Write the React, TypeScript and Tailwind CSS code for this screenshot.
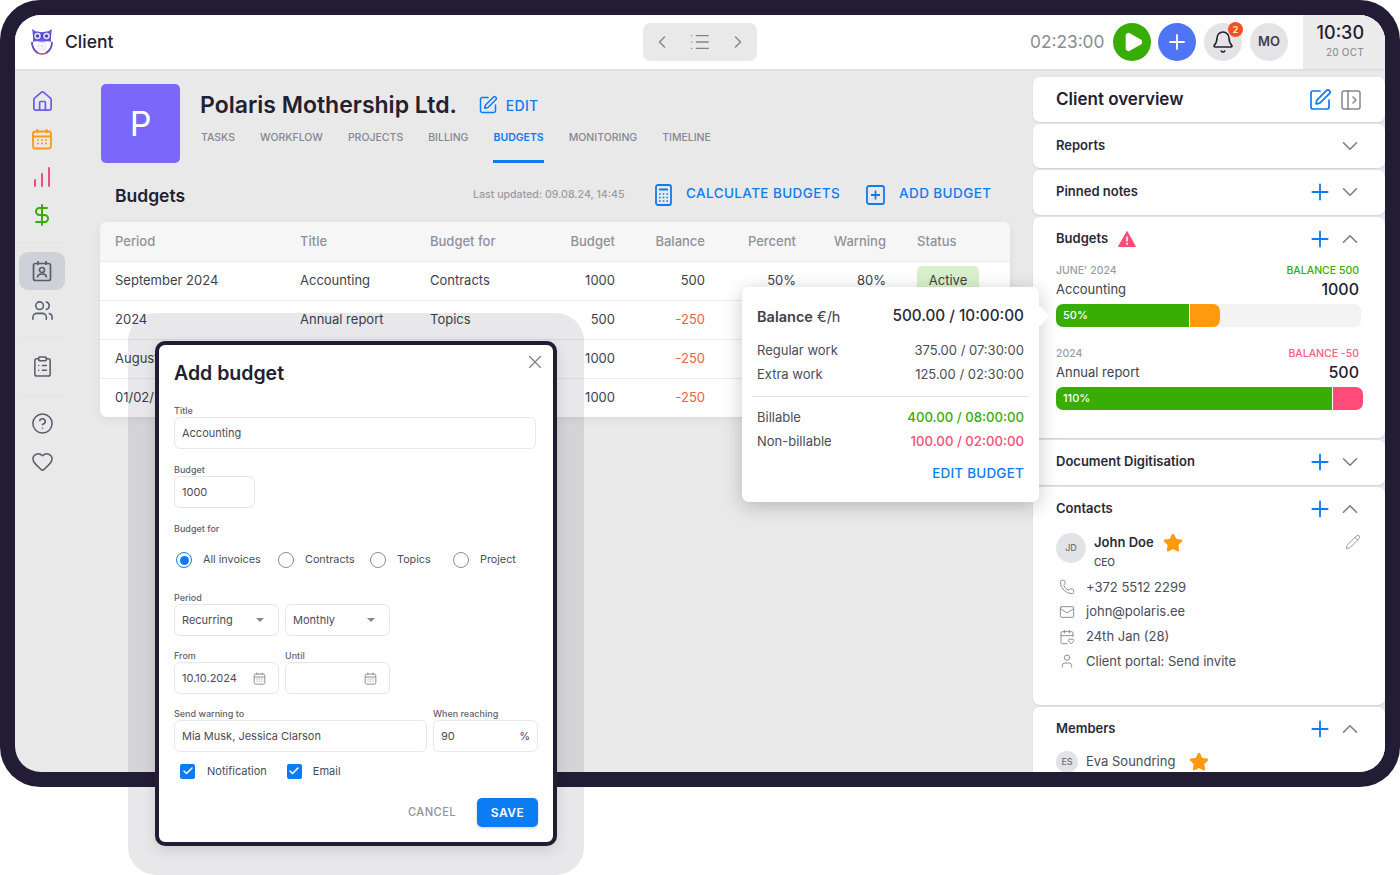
import React from 'react';
import {
  Home, ChartNoAxesColumnIncreasing, DollarSign, Users, ClipboardList, CircleHelp, Heart, SquarePen, ChevronDown, ChevronUp, ChevronLeft, ChevronRight,
  Plus, Play, Bell, Phone, Mail, CalendarHeart, User, Pencil, Star, X, List, PanelLeftOpen, Check,
} from 'lucide-react';

function Owl() {
  return (
    <svg width="24" height="28" viewBox="0 0 24 28" fill="none">
      <path d="M2 14c0 8 5 12 10 12s10-4 10-12" stroke="#e0406c" strokeWidth="1.4" />
      <path d="M2 14c0 6 3 9 6 11" stroke="#5a4fd0" strokeWidth="1.6" />
      <path d="M22 14c0 6-3 9-6 11" stroke="#5a4fd0" strokeWidth="1.6" />
      <path d="M3 8 2 1l5 3h10l5-3-1 7v6c-2-1-4-1-9 0-5-1-7-1-9 0z" fill="#6d5fe8" />
      <circle cx="7.5" cy="8" r="4" fill="#d9d5fb" stroke="#4a3fc4" strokeWidth="1.2" />
      <circle cx="16.5" cy="8" r="4" fill="#d9d5fb" stroke="#4a3fc4" strokeWidth="1.2" />
      <circle cx="7.5" cy="8" r="1.5" fill="#3b30a8" />
      <circle cx="16.5" cy="8" r="1.5" fill="#3b30a8" />
      <path d="M12 14v8M8 18h8" stroke="#dcdce6" strokeWidth="1" />
      <circle cx="12" cy="18" r="4" stroke="#e4e4ec" strokeWidth="1" />
    </svg>
  );
}

function CalendarGrid({ size = 22, color = '#ff9a0f', sw = 1.8 }: { size?: number; color?: string; sw?: number }) {
  return (
    <svg width={size} height={size} viewBox="0 0 22 22" fill="none" stroke={color} strokeWidth={sw}>
      <rect x="2" y="3.5" width="18" height="17" rx="2.5" />
      <path d="M2 8.5h18M6.5 1v4M15.500 1v4" />
      <path d="M6 12h2M10 12h2M14 12h2M6 15.500h2M10 15.500h2M14 15.500h2" strokeWidth="1.3" />
    </svg>
  );
}

function ContactIcon() {
  return (
    <svg width="22" height="22" viewBox="0 0 22 22" fill="none" stroke="#5a5d6b" strokeWidth="1.7">
      <rect x="2.500" y="3.500" width="17" height="17" rx="2" />
      <path d="M7 1v4M15 1v4" />
      <circle cx="11" cy="10" r="2.500" />
      <path d="M6.500 17.500c0-2.500 2-3.500 4.500-3.500s4.500 1 4.500 3.500" />
    </svg>
  );
}

function CalcIcon() {
  return (
    <svg width="17" height="22" viewBox="0 0 17 22" fill="none" stroke="#0b7cf2" strokeWidth="1.8">
      <rect x="1" y="1" width="15" height="20" rx="2" />
      <path d="M4 5.500h9" strokeWidth="2.200" />
      <path d="M4 10h1.600M7.700 10h1.600M11.400 10h1.600M4 13.500h1.600M7.700 13.500h1.600M11.400 13.500h1.600M4 17h1.600M7.700 17h1.600M11.400 17h1.600" strokeWidth="1.500" />
    </svg>
  );
}

function AddIcon() {
  return (
    <svg width="19" height="20" viewBox="0 0 19 20" fill="none" stroke="#0b7cf2" strokeWidth="1.8">
      <rect x="1" y="1" width="17" height="18" rx="2" />
      <path d="M9.500 5.500v9M5 10h9" />
    </svg>
  );
}

function WarnIcon() {
  return (
    <svg width="18" height="16" viewBox="0 0 18 16">
      <path d="M9 .5 17.500 15.500H.5z" fill="#ff4b78" stroke="#ff4b78" strokeLinejoin="round" />
      <path d="M9 5.500v5" stroke="#fff" strokeWidth="1.600" />
      <circle cx="9" cy="12.700" r="1" fill="#fff" />
    </svg>
  );
}

function Sidebar() {
  return (
    <aside className="flex w-[85px] shrink-0 flex-col items-start pl-[4px] pt-[21px]">
      <div className="flex w-[46px] flex-col items-center gap-[16px]">
        <Home size={23} color="#6a5ee8" strokeWidth={1.8} className="-my-[0.5px]" />
        <CalendarGrid />
        <ChartNoAxesColumnIncreasing size={24} color="#ee4f78" strokeWidth={2} className="-my-px" />
        <DollarSign size={24} color="#37ad05" strokeWidth={2} className="-my-px" />
      </div>
      <div className="mt-[16px] h-px w-[46px] bg-[#e2e2e4]" />
      <div className="mt-[9px] flex h-[38px] w-[46px] items-center justify-center rounded-[9px] bg-[#ced1d8]">
        <ContactIcon />
      </div>
      <div className="mt-[9px] flex w-[46px] justify-center">
        <Users size={23} color="#5a5d6b" strokeWidth={1.6} />
      </div>
      <div className="mt-[15px] h-px w-[46px] bg-[#e2e2e4]" />
      <div className="mt-[17px] flex w-[46px] justify-center">
        <ClipboardList size={23} color="#5a5d6b" strokeWidth={1.6} />
      </div>
      <div className="mt-[17px] h-px w-[46px] bg-[#e2e2e4]" />
      <div className="mt-[16px] flex w-[46px] flex-col items-center gap-[15px]">
        <CircleHelp size={23} color="#5a5d6b" strokeWidth={1.6} />
        <Heart size={23} color="#5a5d6b" strokeWidth={1.6} />
      </div>
    </aside>
  );
}

function Header() {
  return (
    <header className="relative z-10 flex h-[54px] shrink-0 items-center bg-white shadow-[0_1px_2px_rgba(0,0,0,0.08)]">
      <div className="ml-[15px] flex w-[613px] items-center gap-[11px]">
        <Owl />
        <span className="text-[17.500px] font-medium text-[#232030]">Client</span>
      </div>
      <div className="flex h-[38px] w-[114px] items-center justify-between rounded-[8px] bg-[#e9e9ea] px-[9px]">
        <ChevronLeft size={20} color="#82858f" strokeWidth={1.7} />
        <List size={22} color="#82858f" strokeWidth={1.4} />
        <ChevronRight size={20} color="#82858f" strokeWidth={1.7} />
      </div>
      <span className="ml-[273px] w-[75px] whitespace-nowrap text-[17.300px] text-[#8a8c93]">02:23:00</span>
      <div className="ml-[8px] flex size-[38px] items-center justify-center rounded-full bg-[#37ad05]">
        <Play size={22} fill="#fff" color="#fff" className="ml-[2px]" />
      </div>
      <div className="ml-[7px] flex size-[38px] items-center justify-center rounded-full bg-[#4f74f5]">
        <Plus size={24} color="#fff" strokeWidth={1.8} />
      </div>
      <div className="relative ml-[8px] flex size-[38px] items-center justify-center rounded-full bg-[#e4e4e6]">
        <Bell size={24} color="#232030" strokeWidth={1.6} />
        <span className="absolute -right-[1px] -top-[1px] flex size-[15px] items-center justify-center rounded-full bg-[#f4511e] text-[9px] font-medium text-white">2</span>
      </div>
      <div className="ml-[8px] flex size-[38px] items-center justify-center rounded-full bg-[#e4e4e6] text-[13px] font-semibold text-[#3d3f4b]">MO</div>
      <div className="ml-[15px] flex h-full flex-1 flex-col items-end justify-center bg-[#ececed] pb-[5px] pr-[21px]">
        <span className="text-[18px] font-medium leading-[22px] text-[#232030]">10:30</span>
        <span className="mt-[2px] text-[10px] font-medium leading-[12px] tracking-[0.2px] text-[#92949b]">20 OCT</span>
      </div>
    </header>
  );
}

const tabs = ['TASKS', 'WORKFLOW', 'PROJECTS', 'BILLING', 'BUDGETS', 'MONITORING', 'TIMELINE'];

function Row({ a, b, c, d, e, f, g, active }: { a: string; b: string; c: string; d: string; e: string; f: string; g: string; active?: boolean }) {
  const neg = e.startsWith('-');
  return (
    <div className="grid h-[39px] grid-cols-[185px_130px_92px_93px_90px_91px_90px_1fr] items-center border-t border-[#ececec] pl-[15px] text-[13px] text-[#3d3f4b]">
      <span>{a}</span>
      <span>{b}</span>
      <span>{c}</span>
      <span className="text-right">{d}</span>
      <span className={`text-right ${neg ? 'text-[#f2603c]' : ''}`}>{e}</span>
      <span className="text-right">{f}</span>
      <span className="text-right">{g}</span>
      {active ? <span className="ml-[31px] flex h-[30px] w-[62px] items-center justify-center rounded-[5px] bg-[#daf0cc]">Active</span> : <span />}
    </div>
  );
}

function Main() {
  return (
    <main className="w-[933px] shrink-0 pt-[15px]">
      <div className="flex">
        <div className="ml-[1px] flex size-[79px] items-center justify-center rounded-[5px] bg-[#7b68fb] text-[34px] font-normal text-white">P</div>
        <div className="ml-[20px] pt-[6px]">
          <div className="flex items-center">
            <h1 className="text-[23px] font-semibold leading-[30px] text-[#232030]">Polaris Mothership Ltd.</h1>
            <SquarePen size={20} color="#0b7cf2" strokeWidth={1.8} className="ml-[21px]" />
            <span className="ml-[8px] text-[14px] font-medium tracking-[0.3px] text-[#0b7cf2]">EDIT</span>
          </div>
          <nav className="ml-[1px] mt-[9px] flex gap-[25px] text-[10.500px] font-medium text-[#85878f]">
            {tabs.map((t) => (
              <span key={t} className={`h-[34px] border-b-[3px] pt-[1px] ${t === 'BUDGETS' ? 'border-[#0b7cf2] font-semibold text-[#0b7cf2]' : 'border-transparent'}`}>{t}</span>
            ))}
          </nav>
        </div>
      </div>
      <div className="mt-[20px] flex h-[24px] items-center pl-[15px]">
        <h2 className="mt-[2px] w-[358px] text-[17.500px] font-semibold text-[#232030]">Budgets</h2>
        <span className="w-[182px] text-[10.600px] font-medium text-[#9a9ca3]">Last updated: 09.08.24, 14:45</span>
        <CalcIcon />
        <span className="mb-[4px] ml-[14px] text-[13.500px] font-medium tracking-[0.4px] text-[#0b7cf2]">CALCULATE BUDGETS</span>
        <span className="ml-[26px] flex"><AddIcon /></span>
        <span className="mb-[4px] ml-[14px] text-[13.500px] font-medium tracking-[0.4px] text-[#0b7cf2]">ADD BUDGET</span>
      </div>
      <div className="mt-[15px] w-[910px] overflow-hidden rounded-[7px] bg-white shadow-[0_2px_10px_rgba(0,0,0,0.06)]">
        <div className="grid h-[39px] grid-cols-[185px_130px_92px_93px_90px_91px_90px_1fr] items-center bg-[#f6f6f6] pl-[15px] text-[13px] font-medium text-[#90929a]">
          <span>Period</span><span>Title</span><span>Budget for</span>
          <span className="text-right">Budget</span><span className="text-right">Balance</span>
          <span className="text-right">Percent</span><span className="text-right">Warning</span>
          <span className="pl-[31px]">Status</span>
        </div>
        <Row a="September 2024" b="Accounting" c="Contracts" d="1000" e="500" f="50%" g="80%" active />
        <Row a="2024" b="Annual report" c="Topics" d="500" e="-250" f="" g="" />
        <Row a="August 2024" b="" c="" d="1000" e="-250" f="" g="" />
        <Row a="01/02/2024" b="" c="" d="1000" e="-250" f="" g="" />
      </div>
    </main>
  );
}

function Section({ title, h, plus, open, warn, children }: { title: string; h: number; plus?: boolean; open?: boolean; warn?: boolean; children?: React.ReactNode }) {
  return (
    <section style={{ height: h }} className="shrink-0 rounded-[7px] bg-white shadow-[0_1px_2px_rgba(0,0,0,0.1)]">
      <div className="flex h-[44px] items-center pl-[23px] pr-[22px]">
        <span className="pb-[1px] text-[13px] font-semibold text-[#2b2938]">{title}</span>
        {warn && <span className="ml-[10px] flex"><WarnIcon /></span>}
        <span className="flex-1" />
        {plus && <Plus size={26} color="#0b7cf2" strokeWidth={1.7} className="mr-[4px]" />}
        {open ? <ChevronUp size={26} color="#7d7f88" strokeWidth={1.5} /> : <ChevronDown size={26} color="#7d7f88" strokeWidth={1.5} />}
      </div>
      {children}
    </section>
  );
}

function BudgetBlock({ year, bal, balCls, title, amount, children }: { year: string; bal: string; balCls: string; title: string; amount: string; children: React.ReactNode }) {
  return (
    <div className="pl-[23px] pr-[26px]">
      <div className="flex items-center justify-between text-[10.500px] font-medium leading-[14px]">
        <span className="text-[#9a9ca3]">{year}</span>
        <span className={balCls}>{bal}</span>
      </div>
      <div className="flex items-center justify-between leading-[22px]">
        <span className="text-[13px] text-[#3d3f4b]">{title}</span>
        <span className="text-[16px] font-medium text-[#232030]">{amount}</span>
      </div>
      {children}
    </div>
  );
}

function ContactLine({ icon, text }: { icon: React.ReactNode; text: string }) {
  return (
    <div className="flex h-[24.700px] items-center text-[13px] text-[#4a4c58]">
      <span className="flex w-[30px] pl-[3px]">{icon}</span>
      <span>{text}</span>
    </div>
  );
}

function RightPanel() {
  return (
    <aside className="flex w-[352px] shrink-0 flex-col gap-[2px] pt-[8px]">
      <div className="flex h-[45px] shrink-0 items-center rounded-[7px] bg-white pl-[23px] pr-[22px] shadow-[0_1px_2px_rgba(0,0,0,0.1)]">
        <span className="flex-1 text-[17px] font-semibold text-[#232030]">Client overview</span>
        <SquarePen size={24} color="#0b7cf2" strokeWidth={1.7} />
        <PanelLeftOpen size={24} color="#85878f" strokeWidth={1.5} className="ml-[7px]" />
      </div>
      <Section title="Reports" h={44} />
      <Section title="Pinned notes" h={45} plus />
      <Section title="Budgets" h={221} plus open warn>
        <div className="mt-[3px]">
          <BudgetBlock year="JUNE' 2024" bal="BALANCE 500" balCls="text-[#37ad05]" title="Accounting" amount="1000">
            <div className="mt-[4px] flex h-[23px] w-[305px] overflow-hidden rounded-[7px] bg-[#f3f3f4] text-[11px] font-medium text-white">
              <div className="flex w-[134px] items-center border-r border-white bg-[#37ad05] pl-[7px]">50%</div>
              <div className="w-[30px] rounded-r-[7px] bg-[#ff9a0f]" />
            </div>
          </BudgetBlock>
        </div>
        <div className="mt-[20px]">
          <BudgetBlock year="2024" bal="BALANCE -50" balCls="text-[#ff5a82]" title="Annual report" amount="500">
            <div className="mt-[4px] flex h-[23px] w-[307px] overflow-hidden rounded-[7px] text-[11px] font-medium text-white">
              <div className="flex w-[277px] items-center border-r border-white bg-[#37ad05] pl-[7px]">110%</div>
              <div className="flex-1 bg-[#ff4b78]" />
            </div>
          </BudgetBlock>
        </div>
      </Section>
      <Section title="Document Digitisation" h={45} plus />
      <Section title="Contacts" h={218} plus open>
        <div className="pl-[23px] pr-[24px] pt-[2px]">
          <div className="flex">
            <div className="flex size-[30px] items-center justify-center rounded-full bg-[#e2e3e6] text-[9px] font-medium text-[#70727c]">JD</div>
            <div className="ml-[8px] flex-1">
              <div className="flex h-[20px] items-center">
                <span className="text-[13px] font-semibold text-[#2b2938]">John Doe</span>
                <Star size={20} fill="#ff9a0f" color="#ff9a0f" className="ml-[9px]" />
              </div>
              <div className="mt-[3px] text-[10px] font-medium leading-[12px] text-[#4a4c58]">CEO</div>
            </div>
            <Pencil size={16} color="#8f9199" strokeWidth={1.4} className="mt-[1px]" />
          </div>
          <div className="mt-[7px]">
            <ContactLine icon={<Phone size={16} color="#85878f" strokeWidth={1.4} />} text="+372 5512 2299" />
            <ContactLine icon={<Mail size={16} color="#85878f" strokeWidth={1.4} />} text="john@polaris.ee" />
            <ContactLine icon={<CalendarHeart size={16} color="#85878f" strokeWidth={1.4} />} text="24th Jan (28)" />
            <ContactLine icon={<User size={16} color="#85878f" strokeWidth={1.4} />} text="Client portal: Send invite" />
          </div>
        </div>
      </Section>
      <Section title="Members" h={80} plus open>
        <div className="flex items-center pl-[23px] text-[13px] text-[#4a4c58]">
          <div className="flex size-[22px] items-center justify-center rounded-full bg-[#e2e3e6] text-[9px] font-medium text-[#70727c]">ES</div>
          <span className="ml-[8px]">Eva Soundring</span>
          <Star size={20} fill="#ff9a0f" color="#ff9a0f" className="ml-[14px]" />
        </div>
      </Section>
    </aside>
  );
}

function Popover() {
  return (
    <div className="absolute left-[742px] top-[287px] h-[215px] w-[297px] rounded-[7px] bg-white px-[15px] pt-[18px] shadow-[0_4px_20px_rgba(0,0,0,0.22)]">
      <span className="absolute -right-[8px] top-[22px] size-[14px] rotate-45 bg-white" />
      <div className="flex items-center justify-between">
        <span className="text-[14.500px] text-[#3d3f4b]"><b className="font-semibold">Balance</b> €/h</span>
        <span className="text-[15.300px] font-medium text-[#2b2938]">500.00 / 10:00:00</span>
      </div>
      <div className="mt-[13px] space-y-[5px] text-[13px] leading-[19px] text-[#4a4c58]">
        <div className="flex justify-between"><span>Regular work</span><span>375.00 / 07:30:00</span></div>
        <div className="flex justify-between"><span>Extra work</span><span>125.00 / 02:30:00</span></div>
      </div>
      <div className="-mx-[5px] mt-[12px] h-px bg-[#e4e4e6]" />
      <div className="mt-[11px] space-y-[5px] text-[13px] leading-[19px] text-[#4a4c58]">
        <div className="flex justify-between"><span>Billable</span><span className="text-[13.200px] font-medium text-[#37ad05]">400.00 / 08:00:00</span></div>
        <div className="flex justify-between"><span>Non-billable</span><span className="text-[13.200px] font-medium text-[#f04f78]">100.00 / 02:00:00</span></div>
      </div>
      <div className="mt-[12px] text-right text-[13.500px] font-medium tracking-[0.2px] text-[#0b7cf2]">EDIT BUDGET</div>
    </div>
  );
}

function Field({ label, className, children }: { label: string; className?: string; children: React.ReactNode }) {
  return (
    <div className={className}>
      <div className="text-[9px] font-medium leading-[11px] text-[#5f616c]">{label}</div>
      <div className="mt-[1px] flex h-[32px] items-center justify-between rounded-[6px] border border-[#e7e7ea] px-[7px] text-[11px] text-[#4a4c58]">{children}</div>
    </div>
  );
}

function Radio({ label, on, w }: { label: string; on?: boolean; w: string }) {
  return (
    <div className={`flex items-center ${w}`}>
      <span className={`flex size-[16px] shrink-0 items-center justify-center rounded-full border-[1.500px] ${on ? 'border-[#0b7cf2]' : 'border-[#8a8c93]'}`}>
        {on && <span className="size-[9px] rounded-full bg-[#0b7cf2]" />}
      </span>
      <span className="ml-[11px] text-[10.800px] text-[#4a4c58]">{label}</span>
    </div>
  );
}

function CheckBox({ label, gap }: { label: string; gap: string }) {
  return (
    <div className="flex items-center">
      <span className="flex size-[15px] items-center justify-center rounded-[2px] bg-[#0b7cf2]"><Check size={12} color="#fff" strokeWidth={3} /></span>
      <span className={`text-[11px] text-[#4a4c58] ${gap}`}>{label}</span>
    </div>
  );
}

const Caret = () => <span className="mr-[7px] h-0 w-0 border-x-[4px] border-t-[4px] border-x-transparent border-t-[#85878f]" />;

function Modal() {
  return (
    <div className="absolute left-[128px] top-[313px] h-[562px] w-[456px] rounded-[28px] bg-[rgba(30,30,50,0.1)] pl-[27px] pt-[28px]">
      <div className="relative h-[505px] w-[402px] rounded-[10px] border-[4px] border-[#231c35] bg-white pl-[15px] shadow-[0_4px_14px_rgba(0,0,0,0.12)]">
        <X size={22} color="#7d7f88" strokeWidth={1.4} className="absolute right-[7px] top-[6px]" />
        <h3 className="pt-[14px] text-[19.500px] font-semibold leading-[28px] text-[#232030]">Add budget</h3>
        <Field label="Title" className="mt-[18px] w-[362px]"><span>Accounting</span></Field>
        <Field label="Budget" className="mt-[15px] w-[81px]"><span>1000</span></Field>
        <div className="mt-[15px] text-[9px] font-medium leading-[11px] text-[#5f616c]">Budget for</div>
        <div className="ml-[2px] mt-[14px] flex h-[24px] items-center">
          <Radio label="All invoices" on w="w-[102px]" />
          <Radio label="Contracts" w="w-[92px]" />
          <Radio label="Topics" w="w-[83px]" />
          <Radio label="Project" w="w-[80px]" />
        </div>
        <div className="mt-[20px] flex gap-[6px]">
          <Field label="Period" className="w-[105px]"><span>Recurring</span><Caret /></Field>
          <Field label="&nbsp;" className="w-[105px]"><span>Monthly</span><Caret /></Field>
        </div>
        <div className="mt-[14px] flex gap-[6px]">
          <Field label="From" className="w-[105px]"><span>10.10.2024</span><span className="mr-[5px] flex"><CalendarGrid size={13} color="#85878f" sw={1.6} /></span></Field>
          <Field label="Until" className="w-[105px]"><span /><span className="mr-[5px] flex"><CalendarGrid size={13} color="#85878f" sw={1.6} /></span></Field>
        </div>
        <div className="mt-[14px] flex gap-[6px]">
          <Field label="Send warning to" className="w-[253px]"><span>Mia Musk, Jessica Clarson</span></Field>
          <Field label="When reaching" className="w-[105px]"><span>90</span><span>%</span></Field>
        </div>
        <div className="ml-[6px] mt-[11px] flex gap-[20px]">
          <CheckBox label="Notification" gap="ml-[12px]" />
          <CheckBox label="Email" gap="ml-[11px]" />
        </div>
        <div className="mt-[18px] flex w-[364px] items-center justify-end">
          <span className="pt-[1px] text-[11.200px] font-medium tracking-[0.4px] text-[#92949b]">CANCEL</span>
          <span className="ml-[21px] flex h-[29px] w-[61px] items-center justify-center rounded-[5px] bg-[#0b7cf2] pt-[1px] text-[12px] font-semibold tracking-[0.5px] text-white shadow-[0_1px_3px_rgba(0,0,0,0.2)]">SAVE</span>
        </div>
      </div>
    </div>
  );
}

export default function App() {
  return (
    <div className="relative h-[875px] w-[1400px] overflow-hidden bg-white font-['Inter',sans-serif]">
      <div className="h-[787px] rounded-[40px] bg-[#231c35] p-[15px]">
        <div className="flex h-full flex-col overflow-hidden rounded-[26px] bg-[#e9e9ea]">
          <Header />
          <div className="flex min-h-0 flex-1">
            <Sidebar />
            <Main />
            <RightPanel />
          </div>
        </div>
      </div>
      <Popover />
      <Modal />
    </div>
  );
}
